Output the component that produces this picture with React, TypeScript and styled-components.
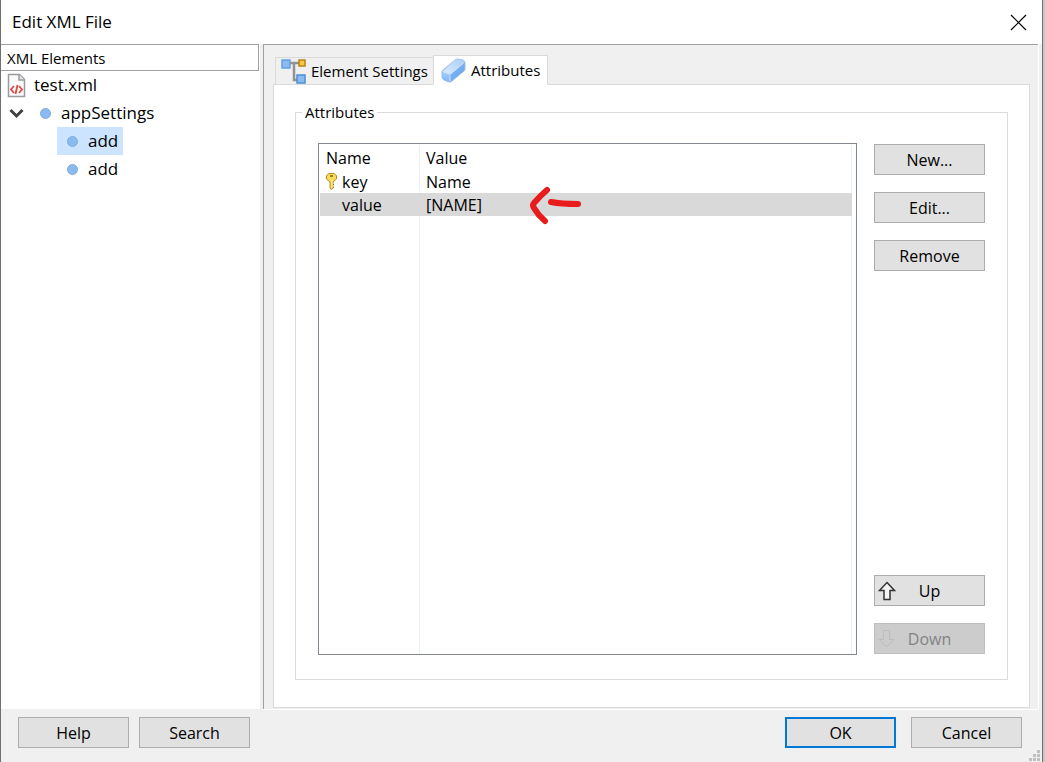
import React from "react";
import styled, { createGlobalStyle } from "styled-components";

const GlobalStyle = createGlobalStyle`
  *, *::before, *::after { box-sizing: border-box; }
  body { margin: 0; background: #c8c8c8; }
  button { font: inherit; color: inherit; }
  svg { flex: none; }
`;

const Desktop = styled.div`
  display: flex;
  min-height: 100vh;
  padding: 0 2px 0 0;
  background: #c8c8c8;
`;

const Dialog = styled.main`
  position: relative;
  flex: 1;
  min-width: 0;
  display: flex;
  flex-direction: column;
  border: solid #707070;
  border-width: 0 1px;
  background: #f0f0f0;
  color: #000;
  font: 16px/20px "Open Sans", "Noto Sans", sans-serif;
`;

const TitleBar = styled.header`
  display: flex;
  align-items: center;
  justify-content: space-between;
  height: 44px;
  padding: 0 15px 0 11px;
  background: #fff;
`;

const Title = styled.h1`
  margin: 0;
  font-size: 17px;
  line-height: 24px;
  font-weight: 400;
`;

const CloseButton = styled.button`
  display: flex;
  padding: 0;
  border: 0;
  background: none;
`;

const Body = styled.div`
  flex: 1;
  display: flex;
  padding-right: 4px;
`;

const Sidebar = styled.aside`
  width: 259px;
  flex: none;
  background: #fff;
`;

const SidebarHeading = styled.h2`
  width: 258px;
  height: 27px;
  margin: 0;
  padding: 0 6px;
  border: 1px solid #a0a0a0;
  border-left: 0;
  font-size: 15px;
  line-height: 27px;
  font-weight: 400;
`;

const Tree = styled.ul`
  margin: 0;
  padding: 0;
  list-style: none;
  font-size: 17px;
  line-height: 28px;
`;

const TreeRow = styled.li<{ $indent: number }>`
  display: flex;
  height: 28px;
  padding-left: ${(p) => p.$indent}px;
`;

const TreeLabel = styled.span<{ $gap: number; $selected?: boolean }>`
  display: flex;
  align-items: center;
  gap: ${(p) => p.$gap}px;
  padding: 0 5px 0 10px;
  background: ${(p) => (p.$selected ? "#cce4ff" : "none")};
`;

const FileLabel = styled(TreeLabel)`
  padding: 0;
`;

const Toggle = styled.button`
  display: flex;
  align-items: center;
  width: 21px;
  padding: 0;
  border: 0;
  background: none;
`;

const Dot = styled.span`
  width: 11px;
  height: 11px;
  border: 1px solid #7fade0;
  border-radius: 50%;
  background: #8bbaf0;
`;

const Pane = styled.section`
  flex: 1;
  min-width: 0;
  display: flex;
  flex-direction: column;
  margin-left: 3px;
  padding: 10px 8px 1px 9px;
  border: solid #a0a0a0;
  border-width: 1px 0 0 1px;
  box-shadow: 1px 0 0 #fff, 0 1px 0 #fff;
`;

const TabList = styled.div`
  display: flex;
  align-items: flex-end;
  height: 30px;
  padding-left: 2px;
  margin-bottom: -1px;
`;

const Tab = styled.button<{ $active?: boolean }>`
  position: relative;
  display: flex;
  align-items: center;
  width: ${(p) => (p.$active ? 115 : 158)}px;
  height: ${(p) => (p.$active ? 30 : 28)}px;
  gap: 5px;
  padding: 0 0 0 ${(p) => (p.$active ? 7 : 5)}px;
  border: 1px solid #dadada;
  border-right-width: ${(p) => (p.$active ? 1 : 0)}px;
  border-bottom-color: ${(p) => (p.$active ? "#fff" : "#dadada")};
  background: ${(p) => (p.$active ? "#fff" : "#f0f0f0")};
  font-size: 15px;
  white-space: nowrap;
`;

const TabPanel = styled.div`
  flex: 1;
  display: flex;
  flex-direction: column;
  padding: 17px 21px 27px;
  border: 1px solid #dadada;
  background: #fff;
`;

const Group = styled.fieldset`
  flex: 1;
  display: flex;
  min-width: 0;
  margin: 0;
  padding: 21px 22px 24px;
  border: 1px solid #dcdcdc;
`;

const GroupTitle = styled.legend`
  height: 20px;
  margin-left: -16px;
  padding: 0 3px;
  font-size: 15px;
`;

const GroupContent = styled.div`
  flex: 1;
  min-width: 0;
  display: flex;
  gap: 17px;
`;

const ListBox = styled.div`
  position: relative;
  flex: 1;
  min-width: 0;
  min-height: 240px;
  padding: 1px 4px 1px 1px;
  border: 1px solid #828790;
  background:
    linear-gradient(#e9f1f7, #e9f1f7) 100px 1px / 1px 100% no-repeat,
    linear-gradient(#e9f1f7, #e9f1f7) right 4px top 1px / 1px 100% no-repeat,
    #fff;
`;

const Table = styled.table`
  width: 100%;
  table-layout: fixed;
  border-collapse: collapse;
  text-align: left;
`;

const Row = styled.tr<{ $selected?: boolean }>`
  background: ${(p) => (p.$selected ? "#d9d9d9" : "none")};
`;

const HeadCell = styled.th`
  height: 25px;
  padding: 0 0 0 6px;
  font-weight: 400;

  &:first-child { width: 100px; }
`;

const Cell = styled.td`
  height: 23px;
  padding: 0 0 0 6px;
`;

const KeyCell = styled.div`
  display: grid;
  grid-template-columns: 11px 1fr;
  gap: 5px;
  align-items: center;
`;

const KeySlot = styled.span`
  display: flex;
`;

const Annotation = styled.svg`
  position: absolute;
  left: 208px;
  top: 40px;
`;

const Actions = styled.div`
  display: flex;
  flex-direction: column;
  gap: 17px;
  padding: 1px 0;
`;

const Spacer = styled.div`
  flex: 1;
`;

const Button = styled.button<{ $primary?: boolean }>`
  display: flex;
  align-items: center;
  justify-content: center;
  width: 111px;
  height: 31px;
  padding: 0;
  border: ${(p) => (p.$primary ? "2px solid #0078d7" : "1px solid #adadad")};
  background: #e1e1e1;

  &:disabled {
    border-color: #bfbfbf;
    background: #cccccc;
    color: #838383;
  }
`;

const IconButton = styled(Button)`
  display: grid;
  grid-template-columns: 18px 1fr 18px;
  padding: 0 3px;
`;

const Footer = styled.footer`
  display: flex;
  gap: 10px;
  height: 53px;
  padding: 8px 20px 0 17px;
`;

const Confirm = styled.div`
  display: flex;
  gap: 15px;
  margin-left: auto;
`;

const SizeGrip = styled.svg`
  position: absolute;
  right: 2px;
  bottom: 0;
`;

function FileIcon() {
  return (
    <svg width="20" height="25" viewBox="0 0 20 25" fill="none">
      <path d="M1.500 1.500h11l5 5v17h-16z" fill="#fafafa" stroke="#999b9f" strokeWidth="1.500" />
      <path d="M12 1.500v5.500h5.500" fill="#e5e5e7" stroke="#999b9f" strokeWidth="1.500" />
      <path d="M7 13l-3 3.500 3 3.500M12 13l3 3.500-3 3.500M10.500 12l-2 9" stroke="#e04848" strokeWidth="1.800" />
    </svg>
  );
}

function TreeIcon() {
  return (
    <svg width="25" height="25" viewBox="0 0 25 25" fill="none">
      <path d="M8 4h10M13 4v17h4" stroke="#929292" strokeWidth="2.500" />
      <rect x="1" y="1" width="8" height="8" fill="#8abaf0" stroke="#65a0df" strokeWidth="1.500" />
      <rect x="18" y="1" width="6" height="6" fill="#f8c744" stroke="#b78319" strokeWidth="1.500" />
      <rect x="16" y="16" width="8" height="8" fill="#8abaf0" stroke="#4e8fd3" strokeWidth="1.500" />
    </svg>
  );
}

function BlockIcon() {
  return (
    <svg width="25" height="25" viewBox="0 0 25 25">
      <defs>
        <linearGradient id="blockSide" x1="0" y1="0" x2="1" y2="1">
          <stop offset="0" stopColor="#9ccaff" />
          <stop offset="1" stopColor="#5a9dec" />
        </linearGradient>
        <linearGradient id="blockTop" x1="0" y1="1" x2="1" y2="0">
          <stop offset="0" stopColor="#dcebfc" />
          <stop offset="1" stopColor="#a9cdf5" />
        </linearGradient>
        <linearGradient id="blockFront" x1="0" y1="0" x2="0" y2="1">
          <stop offset="0" stopColor="#a8d0fd" />
          <stop offset="1" stopColor="#7db6f8" />
        </linearGradient>
      </defs>
      <path d="M2 12L14 2q1-1 3-1l5 1q2 1 2 3v6q0 1-1 2L11 23q-1 1-3 1l-5-2q-2-1-2-3v-5q0-1 1-2z" fill="url(#blockSide)" stroke="#a0bfe0" />
      <path d="M2 13L14 2q1-1 3-1l5 1q2 1 1 3L10 16q-1 1-2 0l-6-2z" fill="url(#blockTop)" />
      <path d="M2 14l6 2.500q1 1 1 2v5l-6-2q-1.500-1-1.500-3v-3.500z" fill="url(#blockFront)" />
      <path d="M9 17.500v5.500M2.500 14L8 16q1 .5 2-.5L22.500 5" fill="none" stroke="#cfe3fb" />
    </svg>
  );
}

function KeyIcon() {
  return (
    <svg width="11" height="17" viewBox="0 0 11 17">
      <path d="M3 .5h5l2.500 2v3.500L7 9v6l-2 1.500L4 15V9L.5 6V2.500z" fill="#f5dc59" stroke="#b48d25" />
      <path d="M4 3h3" stroke="#806015" strokeWidth="1.500" />
      <path d="M6 7v8" stroke="#fff3a0" />
      <path d="M7.500 11v1M7.500 14v1" stroke="#a57c19" />
    </svg>
  );
}

function ArrowIcon({ down = false }: { down?: boolean }) {
  return (
    <svg width="18" height="20" viewBox="0 0 18 20" fill="none">
      <path
        d={down ? "M5.500 1.500h6v9H16l-7.500 7.500L1 10.500h4.500z" : "M9 1.500l7.500 8H12v9H6v-9H1.500z"}
        stroke={down ? "#bcbcbc" : "#333"}
        strokeWidth={down ? 1 : 1.5}
        fill={down ? "none" : "#f4f4f4"}
      />
    </svg>
  );
}

const attributes = [
  { name: "key", value: "Name", isKey: true },
  { name: "value", value: "[NAME]", selected: true },
];

export default function App() {
  return (
    <>
      <GlobalStyle />
      <Desktop>
        <Dialog>
          <TitleBar>
            <Title>Edit XML File</Title>
            <CloseButton aria-label="Close">
              <svg width="17" height="17" viewBox="0 0 17 17" stroke="#000" strokeWidth="1.200">
                <path d="M1 1l15 15M16 1L1 16" />
              </svg>
            </CloseButton>
          </TitleBar>
          <Body>
            <Sidebar>
              <SidebarHeading>XML Elements</SidebarHeading>
              <Tree>
                <TreeRow $indent={6}>
                  <FileLabel $gap={7}>
                    <FileIcon />
                    test.xml
                  </FileLabel>
                </TreeRow>
                <TreeRow $indent={8}>
                  <Toggle aria-label="Collapse appSettings">
                    <svg width="15" height="11" viewBox="0 0 15 11" fill="none" stroke="#404040" strokeWidth="3">
                      <path d="M1.500 2l6 6 6-6" />
                    </svg>
                  </Toggle>
                  <TreeLabel $gap={10}>
                    <Dot />
                    appSettings
                  </TreeLabel>
                </TreeRow>
                <TreeRow $indent={56}>
                  <TreeLabel $gap={10} $selected>
                    <Dot />
                    add
                  </TreeLabel>
                </TreeRow>
                <TreeRow $indent={56}>
                  <TreeLabel $gap={10}>
                    <Dot />
                    add
                  </TreeLabel>
                </TreeRow>
              </Tree>
            </Sidebar>
            <Pane>
              <TabList role="tablist">
                <Tab role="tab" aria-selected={false}>
                  <TreeIcon />
                  Element Settings
                </Tab>
                <Tab role="tab" aria-selected $active>
                  <BlockIcon />
                  Attributes
                </Tab>
              </TabList>
              <TabPanel role="tabpanel">
                <Group>
                  <GroupTitle>Attributes</GroupTitle>
                  <GroupContent>
                    <ListBox>
                      <Table>
                        <thead>
                          <tr>
                            <HeadCell>Name</HeadCell>
                            <HeadCell>Value</HeadCell>
                          </tr>
                        </thead>
                        <tbody>
                          {attributes.map((a) => (
                            <Row key={a.name} $selected={a.selected}>
                              <Cell>
                                <KeyCell>
                                  <KeySlot>{a.isKey && <KeyIcon />}</KeySlot>
                                  {a.name}
                                </KeyCell>
                              </Cell>
                              <Cell>{a.value}</Cell>
                            </Row>
                          ))}
                        </tbody>
                      </Table>
                      <Annotation width="56" height="42" viewBox="0 0 56 42" fill="none" stroke="#e81c1c" strokeWidth="6" strokeLinecap="round" strokeLinejoin="round">
                        <path d="M20 6Q13 12 7 19Q5 21 7 24Q11 31 18 37M24 18Q34 20 51 20" />
                      </Annotation>
                    </ListBox>
                    <Actions>
                      <Button>New...</Button>
                      <Button>Edit...</Button>
                      <Button>Remove</Button>
                      <Spacer />
                      <IconButton>
                        <ArrowIcon />
                        <span>Up</span>
                      </IconButton>
                      <IconButton disabled>
                        <ArrowIcon down />
                        <span>Down</span>
                      </IconButton>
                    </Actions>
                  </GroupContent>
                </Group>
              </TabPanel>
            </Pane>
          </Body>
          <Footer>
            <Button>Help</Button>
            <Button>Search</Button>
            <Confirm>
              <Button $primary>OK</Button>
              <Button>Cancel</Button>
            </Confirm>
          </Footer>
          <SizeGrip width="11" height="12" viewBox="0 0 11 12" fill="#bfbfbf">
            <path d="M8 0h3v3H8zM4 4h3v3H4zM8 4h3v3H8zM0 8h3v3H0zM4 8h3v3H4zM8 8h3v3H8z" />
          </SizeGrip>
        </Dialog>
      </Desktop>
    </>
  );
}
